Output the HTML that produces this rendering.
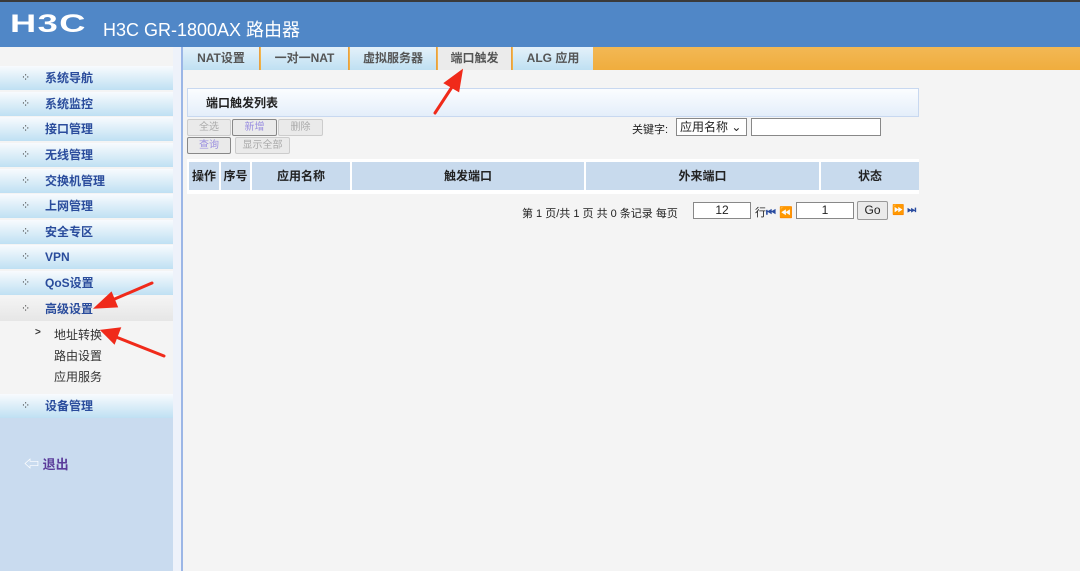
<!DOCTYPE html><html><head><meta charset="utf-8"><style>
*{margin:0;padding:0;box-sizing:border-box}
body{width:1080px;height:571px;overflow:hidden;background:#f4f4f4;font-family:"Liberation Sans","Noto Sans CJK SC",sans-serif;font-size:12px;color:#222;position:relative}
.hd{position:absolute;left:0;top:0;width:1080px;height:47px;background:#5087c7;border-top:2px solid #3a3a3a}
.logo{position:absolute;left:10px;top:8px;color:#fff;font:bold 25px "Liberation Sans",sans-serif;letter-spacing:1px;transform:scaleX(1.45);transform-origin:left}
.ttl{position:absolute;left:103px;top:14px;color:#fff;font-size:18px}
.side{position:absolute;left:0;top:47px;width:173px;height:524px;background:#c9dbef}
.strip{position:absolute;left:173px;top:47px;width:8px;height:524px;background:#eef2fa}
.vline{position:absolute;left:181px;top:47px;width:2px;height:524px;background:#9bb6e6}
.menuwrap{position:absolute;left:0;top:47px;width:173px;height:370px;background:#f4f4f4}
.mi{position:absolute;left:0;width:173px;height:24px;background:linear-gradient(#f8fbfe,#d6ebf7 60%,#bfe0f3);color:#2a4c9c;font-weight:bold;font-size:12px;line-height:24px;padding-left:45px}
.mi:before{content:"⁘";position:absolute;left:21px;top:0;color:#444;font-size:11px;font-weight:normal}
.mi.open{background:linear-gradient(#f4f4f4,#e6e6e6)}
.sub{position:absolute;left:54px;font-size:12px;color:#333}
.tabs{position:absolute;left:183px;top:47px;width:897px;height:23px;background:linear-gradient(#f2b854,#f0ad3e)}
.tab{position:absolute;top:0;height:23px;background:linear-gradient(#e4f1fa,#bfe0f2);border-right:1px solid #e8a040;color:#555;font-weight:bold;font-size:12px;line-height:23px;text-align:center}
.tab.act{background:#ebebeb}
.box{position:absolute;left:187px;top:88px;width:732px;height:29px;background:linear-gradient(#fbfdff,#e4eefa);border:1px solid #c8d8f0;font-weight:bold;font-size:12px;line-height:28px;padding-left:18px}
.btn{position:absolute;height:17px;border:1px solid #ccc;background:#eaeaea;color:#aaa;font-size:10px;line-height:15px;text-align:center;border-radius:2px}
.btn.e{border-color:#888;color:#9a8ee0}
.th{position:absolute;top:162px;height:28px;background:#c8daed;font-weight:bold;font-size:12px;line-height:28px;text-align:center;border-right:2px solid #fff}
.inp{position:absolute;background:#fff;border:1px solid #888;font-size:12px;text-align:center}
.arrow{position:absolute}
</style></head><body>
<div class="hd"><div class="logo">H3C</div><div class="ttl">H3C GR-1800AX 路由器</div></div>
<div class="side"></div>
<div class="menuwrap"></div>
<div class="strip"></div><div class="vline"></div>
<div class="mi" style="top:66px">系统导航</div>
<div class="mi" style="top:92px">系统监控</div>
<div class="mi" style="top:117px">接口管理</div>
<div class="mi" style="top:143px">无线管理</div>
<div class="mi" style="top:169px">交换机管理</div>
<div class="mi" style="top:194px">上网管理</div>
<div class="mi" style="top:220px">安全专区</div>
<div class="mi" style="top:245px">VPN</div>
<div class="mi" style="top:271px">QoS设置</div>
<div class="mi open" style="top:297px">高级设置</div>
<div class="sub" style="top:326px"><span style="position:absolute;left:-19px;top:1px;font-size:10px;font-weight:bold">&gt;</span>地址转换</div>
<div class="sub" style="top:347px">路由设置</div>
<div class="sub" style="top:368px">应用服务</div>
<div class="mi" style="top:394px">设备管理</div>
<div style="position:absolute;left:24px;top:453px;color:#5a3b9a;font-weight:bold;font-size:13px"><span style="color:#fff;font-size:15px">⇦</span> 退出</div>
<div class="tabs">
<div class="tab" style="left:0;width:77px">NAT设置</div>
<div class="tab" style="left:78px;width:88px">一对一NAT</div>
<div class="tab" style="left:167px;width:87px">虚拟服务器</div>
<div class="tab act" style="left:255px;width:74px">端口触发</div>
<div class="tab" style="left:330px;width:80px;border:none">ALG 应用</div>
</div>
<div class="box">端口触发列表</div>
<div class="btn" style="left:187px;top:119px;width:44px">全选</div>
<div class="btn e" style="left:232px;top:119px;width:45px">新增</div>
<div class="btn" style="left:278px;top:119px;width:45px">删除</div>
<div class="btn e" style="left:187px;top:137px;width:44px">查询</div>
<div class="btn" style="left:235px;top:137px;width:55px">显示全部</div>
<div style="position:absolute;left:632px;top:121px;font-size:11px">关键字:</div>
<div class="inp" style="left:676px;top:118px;width:71px;height:18px;text-align:left;padding-left:3px;line-height:16px">应用名称 ⌄</div>
<div class="inp" style="left:751px;top:118px;width:130px;height:18px"></div>
<div style="position:absolute;left:187px;top:159px;width:732px;height:35px;background:#fff"></div>
<div class="th" style="left:189px;width:32px">操作</div>
<div class="th" style="left:221px;width:31px">序号</div>
<div class="th" style="left:252px;width:100px">应用名称</div>
<div class="th" style="left:352px;width:234px">触发端口</div>
<div class="th" style="left:586px;width:235px">外来端口</div>
<div class="th" style="left:821px;width:98px;border:none">状态</div>
<div style="position:absolute;left:522px;top:205px;font-size:11px">第 1 页/共 1 页 共 0 条记录 每页</div>
<div class="inp" style="left:693px;top:202px;width:58px;height:17px;line-height:15px">12</div>
<div style="position:absolute;left:755px;top:204px;font-size:11px">行<span style="color:#2a4ca0;font-weight:bold">⏮ ⏪</span></div>
<div class="inp" style="left:796px;top:202px;width:58px;height:17px;line-height:15px">1</div>
<div class="btn" style="left:857px;top:201px;width:31px;height:19px;color:#222;font-size:12px;border-color:#999;line-height:17px">Go</div>
<div style="position:absolute;left:892px;top:205px;font-size:10px;color:#2a4ca0;font-weight:bold">⏩ ⏭</div>
<svg class="arrow" style="left:0;top:0" width="1080" height="571">
<g fill="#f02a1a" stroke="#f02a1a" stroke-width="3" stroke-linecap="round">
<line x1="435" y1="113" x2="454" y2="84"/><polygon points="461,72 446,83 458,90" />
<line x1="152" y1="283" x2="110" y2="301"/><polygon points="97,307 111,294 116,306"/>
<line x1="164" y1="356" x2="116" y2="337"/><polygon points="103,331 119,329 114,342"/>
</g></svg>
</body></html>
